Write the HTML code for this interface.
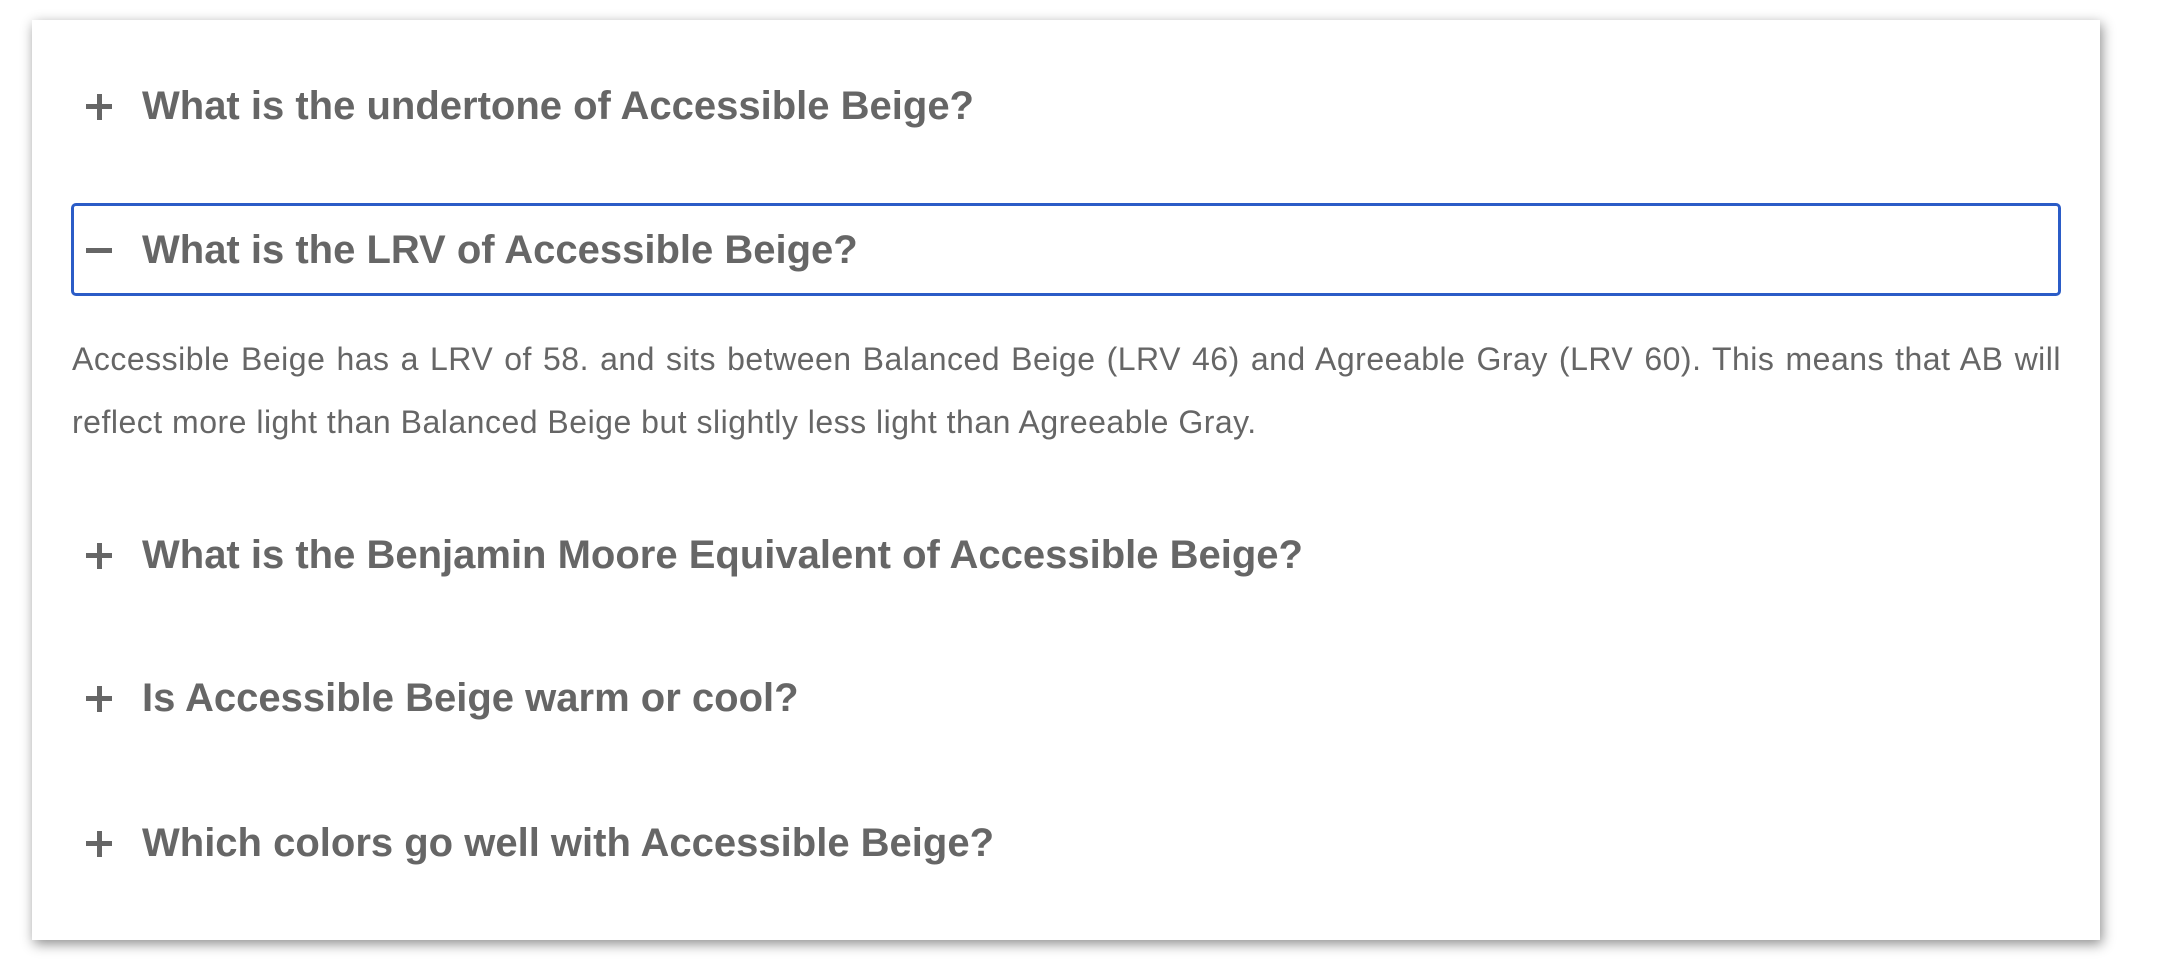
<!DOCTYPE html>
<html><head><meta charset="utf-8"><style>
html,body{margin:0;padding:0;width:2180px;height:966px;background:#fff;overflow:hidden}
.card{position:absolute;left:32px;top:20px;width:2068px;height:920px;background:#fff;box-shadow:2px 4px 12px rgba(0,0,0,.45)}
.q{position:absolute;left:142px;font-family:"Liberation Sans",sans-serif;font-weight:bold;font-size:40px;color:#666;line-height:46px;letter-spacing:0px;white-space:nowrap}
.ic{position:absolute;left:86px;width:26px;height:5px;background:#666}
.ic.p::after{content:"";position:absolute;left:10.5px;top:-10.5px;width:5px;height:26px;background:#666}
.box{position:absolute;left:71px;top:203px;width:1984px;height:87px;border:3px solid #2b5cc7;border-radius:5px}
.para{position:absolute;left:72px;top:328px;width:1989px;font-family:"Liberation Sans",sans-serif;font-size:32px;color:#666;line-height:63px;letter-spacing:0.5px;text-align:justify}
</style></head><body>
<div class="card"></div>
<div class="ic p" style="top:104px"></div><div class="q" style="top:83px">What is the undertone of Accessible Beige?</div>
<div class="box"></div>
<div class="ic" style="top:248px"></div><div class="q" style="top:227px">What is the LRV of Accessible Beige?</div>
<div class="para">Accessible Beige has a LRV of 58. and sits between Balanced Beige (LRV 46) and Agreeable Gray (LRV 60). This means that AB will reflect more light than Balanced Beige but slightly less light than Agreeable Gray.</div>
<div class="ic p" style="top:553px"></div><div class="q" style="top:532px">What is the Benjamin Moore Equivalent of Accessible Beige?</div>
<div class="ic p" style="top:696px"></div><div class="q" style="top:675px">Is Accessible Beige warm or cool?</div>
<div class="ic p" style="top:841px"></div><div class="q" style="top:820px">Which colors go well with Accessible Beige?</div>
</body></html>
